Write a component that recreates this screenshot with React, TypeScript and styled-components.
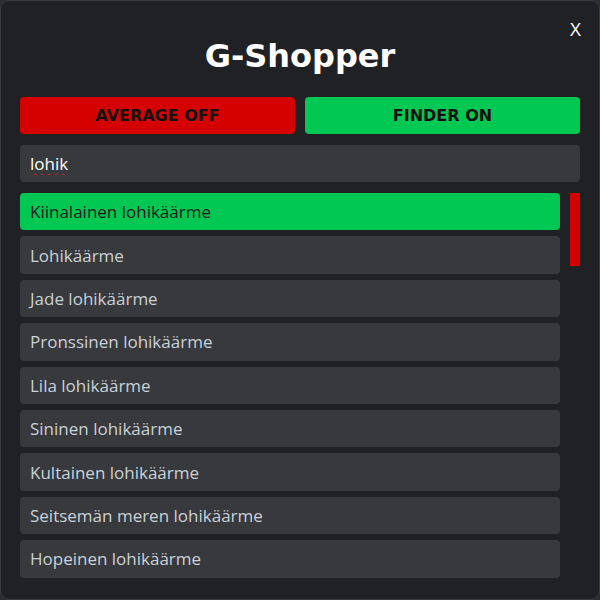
import React from "react";
import styled, { createGlobalStyle } from "styled-components";

const Global = createGlobalStyle`
  html, body { margin: 0; padding: 0; background: #2c2d31; }
  * { box-sizing: border-box; }
`;

const Panel = styled.div`
  position: relative;
  width: 600px;
  height: 600px;
  background: #202125;
  border: 1px solid #3a3b3f;
  border-radius: 9px;
  padding: 0 19px;
  display: flex;
  flex-direction: column;
  overflow: hidden;
`;

const Close = styled.button`
  position: absolute;
  top: 17px;
  right: 18px;
  background: none;
  border: none;
  padding: 0;
  color: #ffffff;
  font-family: "Open Sans", "Noto Sans", sans-serif;
  font-size: 19px;
  line-height: 22px;
  cursor: pointer;
`;

const Title = styled.h1`
  margin: 35px 0 21px;
  text-align: center;
  color: #ffffff;
  font-family: "DejaVu Sans", Verdana, sans-serif;
  font-weight: bold;
  font-size: 32px;
  line-height: 40px;
`;

const ButtonRow = styled.div`
  display: grid;
  grid-template-columns: 1fr 1fr;
  gap: 10px;
`;

const Toggle = styled.button<{ $on: boolean }>`
  height: 37px;
  border: none;
  border-radius: 4px;
  background: ${(p) => (p.$on ? "#00c853" : "#d50000")};
  color: #111111;
  font-family: "DejaVu Sans", Verdana, sans-serif;
  font-weight: bold;
  font-size: 16px;
  cursor: pointer;
`;

const Search = styled.input`
  margin-top: 11px;
  height: 37px;
  width: 100%;
  border: none;
  border-radius: 4px;
  background: #38393c;
  color: #ffffff;
  caret-color: #ffffff;
  padding: 0 10px;
  font-family: "Open Sans", "Noto Sans", sans-serif;
  font-size: 17px;
  outline: none;
  text-decoration: underline wavy #e02020;
  text-decoration-thickness: 1px;
  text-underline-offset: 3px;
`;

const ListArea = styled.div`
  margin-top: 11px;
  margin-bottom: 20px;
  flex: 1;
  min-height: 0;
  display: flex;
  gap: 10px;
`;

const List = styled.div`
  flex: 1;
  overflow: hidden;
  display: flex;
  flex-direction: column;
  gap: 6px;
`;

const ScrollTrack = styled.div`
  width: 10px;
  flex: none;
`;

const Thumb = styled.div`
  width: 10px;
  background: #d50000;
`;

const Item = styled.div<{ $active?: boolean }>`
  flex: none;
  height: 37.4px;
  border-radius: 4px;
  background: ${(p) => (p.$active ? "#00c853" : "#38393c")};
  color: ${(p) => (p.$active ? "#1a1a1a" : "#c9d1d9")};
  display: flex;
  align-items: center;
  padding: 0 10px;
  font-family: "Open Sans", "Noto Sans", sans-serif;
  font-size: 17px;
  cursor: pointer;
`;

const names = [
  "Kiinalainen lohikäärme",
  "Lohikäärme",
  "Jade lohikäärme",
  "Pronssinen lohikäärme",
  "Lila lohikäärme",
  "Sininen lohikäärme",
  "Kultainen lohikäärme",
  "Seitsemän meren lohikäärme",
  "Hopeinen lohikäärme",
];

const totalItems = 47;
const visibleHeight = 387;
const thumbHeight = Math.round((visibleHeight * names.length) / totalItems * 0.98);

export default function App() {
  return (
    <>
      <Global />
      <Panel>
        <Close>X</Close>
        <Title>G-Shopper</Title>
        <ButtonRow>
          <Toggle $on={false}>AVERAGE OFF</Toggle>
          <Toggle $on={true}>FINDER ON</Toggle>
        </ButtonRow>
        <Search defaultValue="lohik" spellCheck={true} autoFocus />
        <ListArea>
          <List>
            {names.map((n, i) => (
              <Item key={n} $active={i === 0}>
                {n}
              </Item>
            ))}
          </List>
          <ScrollTrack>
            <Thumb style={{ height: thumbHeight }} />
          </ScrollTrack>
        </ListArea>
      </Panel>
    </>
  );
}
